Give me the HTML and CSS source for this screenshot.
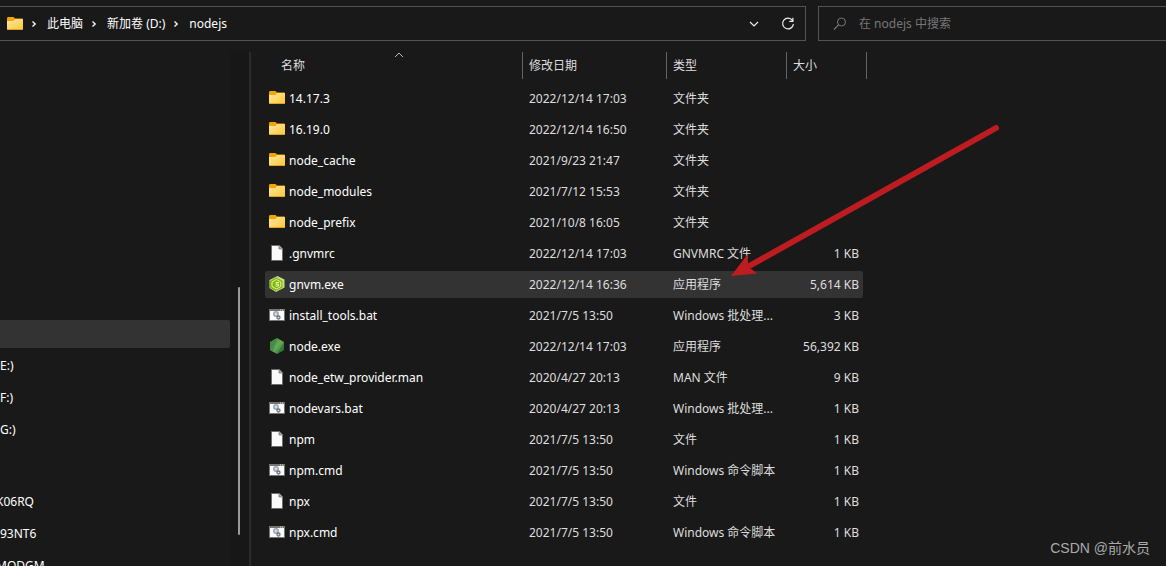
FILE: index.html
```html
<!DOCTYPE html>
<html lang="zh-CN">
<head>
<meta charset="utf-8">
<title>nodejs</title>
<link rel="stylesheet" href="styles.css">
</head>
<body>
<svg class="defs" aria-hidden="true">
  <defs>
    <linearGradient id="gold" x1="0" y1="0" x2="1" y2="1"><stop offset="0" stop-color="#ffe9a2"/><stop offset="1" stop-color="#fdc536"/></linearGradient>
    <linearGradient id="leaf" x1="0" y1="0" x2="1" y2="1"><stop offset="0" stop-color="#2f7a35"/><stop offset=".5" stop-color="#69a95a"/><stop offset="1" stop-color="#2c6f31"/></linearGradient>
    <symbol id="folder" viewBox="0 0 16 16"><path d="M0 2.500Q0 1 1 1h5.500l1.500 1.500h7q1 0 1 1V6H0z" fill="#f2a600"/><path d="M0 5h6.500L8 3h7q1 0 1 1v9q0 1-1 1H1q-1 0-1-1z" fill="url(#gold)"/><path d="M0 12.500q0 1.500 1 1.500h14q1 0 1-1.500-.3.700-1 .7H1q-.7 0-1-.7z" fill="#d99716"/></symbol>
    <symbol id="page" viewBox="0 0 16 16"><path d="M2.500.500h7.500l3.500 3.500v11.500h-11z" fill="#fafafa" stroke="#6d6d69"/><path d="M10 0v4h4z" fill="#aaa" stroke="#6d6d69" stroke-width=".7"/></symbol>
    <symbol id="script" viewBox="0 0 16 16"><path d="M.5 2.500h15v11H.5z" fill="#fafafa" stroke="#77756f"/><path d="M0 2h16v2H0z" fill="#77756f"/><path d="M11 3h1m1 0h1" stroke="#ddd"/><circle cx="7" cy="7" r="2.200" fill="#d5dce4" stroke="#9aa6b3" stroke-width="1.500"/><circle cx="9.500" cy="10.500" r="1.500" fill="#eee" stroke="#6c737c" stroke-width="1.300"/></symbol>
    <symbol id="gnvm" viewBox="0 0 16 16"><path d="M8.500 0 15.500 3.500v8L7 16 .5 12V4z" fill="#c6df84"/><path d="M7.500 1.500 13.500 5v6.500L7 15 1 11.500V5z" fill="#7fb900"/><path d="M7.500 3.500 11.800 6v4.500L7.500 13 3 10.500V6z" fill="none" stroke="#e4f2b5"/><path d="M10 6.500H7v1.700h2.500V10H6.500" fill="none" stroke="#eef8cc"/></symbol>
    <symbol id="node" viewBox="0 0 16 16"><path d="M8 0 15 4v8l-7 4-7-4V4z" fill="url(#leaf)"/><path d="M8 0 1 4v8l3 1.700z" fill="#3d8a40" opacity=".7"/><path d="M15 4v8l-7 4z" fill="#236128" opacity=".45"/></symbol>
    <symbol id="chevron" viewBox="0 0 6 8"><path d="m1.500 1.500 2.700 2.500-2.700 2.500" fill="none" stroke="#f5f5f5" stroke-width="1.400"/></symbol>
  </defs>
</svg>

<header class="toolbar">
  <nav class="address" aria-label="路径">
    <svg class="icon"><use href="#folder"/></svg>
    <svg class="chevron"><use href="#chevron"/></svg>
    <a href="#pc">此电脑</a>
    <svg class="chevron"><use href="#chevron"/></svg>
    <a href="#d">新加卷 (D:)</a>
    <svg class="chevron"><use href="#chevron"/></svg>
    <a href="#nodejs">nodejs</a>
    <div class="address-tools">
      <button type="button" aria-label="历史记录"><svg width="10" height="8" viewBox="0 0 10 8"><path d="m1 2 4 4 4-4" fill="none" stroke="#eee" stroke-width="1.200"/></svg></button>
      <button type="button" aria-label="刷新"><svg width="14" height="14" viewBox="0 0 14 14"><path d="M11.500 3.500A5.400 5.400 0 1 0 12.400 7M11.900.800v3.500H8.300" fill="none" stroke="#eee" stroke-width="1.200"/></svg></button>
    </div>
  </nav>
  <label class="search">
    <svg width="14" height="14" viewBox="0 0 14 14"><circle cx="8.500" cy="5" r="4" fill="none" stroke="#777"/><path d="M5.600 7.900 1 12.500" stroke="#777" stroke-width="1.200"/></svg>
    <input type="search" placeholder="在 nodejs 中搜索" aria-label="搜索">
  </label>
</header>

<main class="content">
  <aside class="sidebar">
    <ul class="tree">
      <li class="selected"></li>
      <li>E:)</li>
      <li>F:)</li>
      <li>G:)</li>
      <li class="group"></li>
      <li class="cut">K06RQ</li>
      <li>93NT6</li>
      <li class="cut">MODGM</li>
    </ul>
    <div class="scrollbar"><div class="thumb"></div></div>
  </aside>
  <section class="files">
    <table>
      <colgroup><col class="c-name"><col class="c-date"><col class="c-type"><col class="c-size"></colgroup>
      <thead><tr>
        <th class="sorted"><button type="button">名称</button><svg class="sort" width="10" height="6" viewBox="0 0 10 6"><path d="m1 5 4-4 4 4" fill="none" stroke="#bbb"/></svg></th>
        <th><button type="button">修改日期</button></th>
        <th><button type="button">类型</button></th>
        <th class="last"><button type="button">大小</button></th>
      </tr></thead>
      <tbody>
        <tr><td><svg class="icon"><use href="#folder"/></svg>14.17.3</td><td>2022/12/14 17:03</td><td>文件夹</td><td></td></tr>
        <tr><td><svg class="icon"><use href="#folder"/></svg>16.19.0</td><td>2022/12/14 16:50</td><td>文件夹</td><td></td></tr>
        <tr><td><svg class="icon"><use href="#folder"/></svg>node_cache</td><td>2021/9/23 21:47</td><td>文件夹</td><td></td></tr>
        <tr><td><svg class="icon"><use href="#folder"/></svg>node_modules</td><td>2021/7/12 15:53</td><td>文件夹</td><td></td></tr>
        <tr><td><svg class="icon"><use href="#folder"/></svg>node_prefix</td><td>2021/10/8 16:05</td><td>文件夹</td><td></td></tr>
        <tr><td><svg class="icon"><use href="#page"/></svg>.gnvmrc</td><td>2022/12/14 17:03</td><td>GNVMRC 文件</td><td>1 KB</td></tr>
        <tr class="selected"><td><svg class="icon"><use href="#gnvm"/></svg>gnvm.exe</td><td>2022/12/14 16:36</td><td>应用程序</td><td>5,614 KB</td></tr>
        <tr><td><svg class="icon"><use href="#script"/></svg>install_tools.bat</td><td>2021/7/5 13:50</td><td>Windows 批处理...</td><td>3 KB</td></tr>
        <tr><td><svg class="icon"><use href="#node"/></svg>node.exe</td><td>2022/12/14 17:03</td><td>应用程序</td><td>56,392 KB</td></tr>
        <tr><td><svg class="icon"><use href="#page"/></svg>node_etw_provider.man</td><td>2020/4/27 20:13</td><td>MAN 文件</td><td>9 KB</td></tr>
        <tr><td><svg class="icon"><use href="#script"/></svg>nodevars.bat</td><td>2020/4/27 20:13</td><td>Windows 批处理...</td><td>1 KB</td></tr>
        <tr><td><svg class="icon"><use href="#page"/></svg>npm</td><td>2021/7/5 13:50</td><td>文件</td><td>1 KB</td></tr>
        <tr><td><svg class="icon"><use href="#script"/></svg>npm.cmd</td><td>2021/7/5 13:50</td><td>Windows 命令脚本</td><td>1 KB</td></tr>
        <tr><td><svg class="icon"><use href="#page"/></svg>npx</td><td>2021/7/5 13:50</td><td>文件</td><td>1 KB</td></tr>
        <tr><td><svg class="icon"><use href="#script"/></svg>npx.cmd</td><td>2021/7/5 13:50</td><td>Windows 命令脚本</td><td>1 KB</td></tr>
      </tbody>
    </table>
  </section>
</main>

<svg class="arrow" width="270" height="156" viewBox="0 0 270 156" aria-hidden="true"><path d="M265 5 20 142" stroke="#bd1c21" stroke-width="6" stroke-linecap="round"/><path d="M0 153 16 132 18 144 26 150.500z" fill="#bd1c21"/></svg>
<p class="watermark">CSDN @前水员</p>
</body>
</html>
```
FILE: styles.css
```css
* { box-sizing: border-box; }
body {
  margin: 0;
  min-height: 100vh;
  display: flex;
  flex-direction: column;
  background: #191919;
  color: #fff;
  font: 12px/16px "Noto Sans", "Noto Sans CJK SC", sans-serif;
}
.defs { position: absolute; width: 0; height: 0; }
.icon { width: 16px; height: 16px; flex: none; }
button { border: 0; padding: 0; background: none; color: inherit; font: inherit; }

.toolbar { display: grid; grid-template-columns: 806fr 348fr; gap: 12px; padding-top: 6px; height: 52px; flex: none; align-items: start; }
.address, .search { display: flex; align-items: center; height: 35px; border: 1px solid #535353; }
.address { border-left: 0; padding: 0 10px 0 7px; }
.address a { color: inherit; text-decoration: none; }
.chevron { width: 6px; height: 8px; margin: 0 10px 0 8px; }
.address-tools { display: flex; gap: 22px; margin-left: auto; }
.address-tools button { display: flex; align-items: center; }
.search { border-right: 0; padding-left: 14px; gap: 12px; }
.search input { flex: 1; min-width: 0; border: 0; padding: 0; background: none; color: #fff; font: inherit; outline: 0; }
.search input::placeholder { color: #777; opacity: 1; }

.content { display: flex; flex: 1; height: calc(100vh - 52px); overflow: hidden; }
.sidebar { display: flex; width: 251px; flex: none; border-right: 2px solid #2b2b2b; overflow: hidden; }
.tree { flex: 1; margin: 0; padding: 268px 0 0; list-style: none; display: flex; flex-direction: column; gap: 4px; }
.tree li { height: 28px; flex: none; line-height: 28px; }
.tree .selected { background: #333; border-radius: 0 2px 2px 0; }
.tree .group { height: 36px; }
.tree .cut { text-indent: -4px; }
.scrollbar { width: 19px; background: #171717; padding: 235px 0 0 8px; }
.thumb { width: 2px; height: 248px; background: #9a9a9a; border-radius: 1px; }

.files { flex: 1; padding-left: 14px; }
table { width: 598px; margin-top: -4px; table-layout: fixed; border-collapse: separate; border-spacing: 0 4px; }
.c-name { width: 258px; }
.c-date { width: 144px; }
.c-type { width: 120px; }
.c-size { width: 76px; }
th { position: relative; height: 29px; padding: 0 0 2px; font-weight: 400; color: #dedede; }
th button { display: block; width: 100%; height: 27px; padding-left: 6px; border-right: 1px solid #636363; text-align: left; }
.sorted button { padding-left: 16px; }
.last button { width: calc(100% + 4px); }
.sort { position: absolute; top: 0; left: 50%; }
td { height: 27px; padding: 0 0 0 6px; color: #dedede; white-space: nowrap; }
td:first-child { padding-left: 4px; color: #fff; }
td .icon { margin-right: 4px; vertical-align: -3px; }
td:last-child { padding: 0 4px 0 0; text-align: right; }
tr.selected td { background: #333; }
tr.selected td:first-child { border-radius: 2px 0 0 2px; }
tr.selected td:last-child { border-radius: 0 2px 2px 0; }

.arrow { position: absolute; left: 731px; top: 123px; }
.watermark { position: absolute; right: 16px; bottom: 8px; margin: 0; color: #aaa; font: 14px/20px "Liberation Sans", "Noto Sans CJK SC", sans-serif; }
```
